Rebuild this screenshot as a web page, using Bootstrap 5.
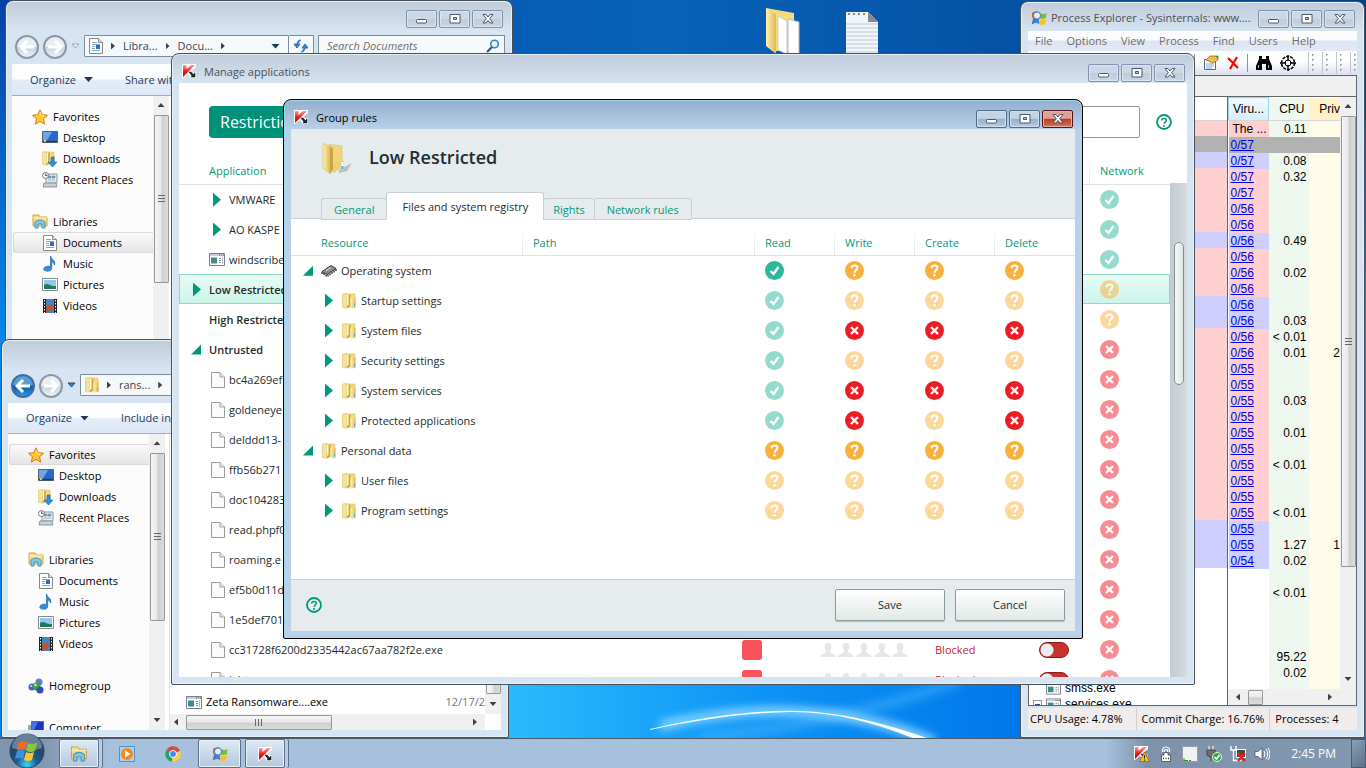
<!DOCTYPE html>
<html lang="en">
<head>
<meta charset="utf-8">
<meta name="viewport" content="width=device-width, initial-scale=1">
<title>Group rules</title>
<link rel="stylesheet" href="https://cdn.jsdelivr.net/npm/bootstrap@5.3.0/dist/css/bootstrap.min.css">
<style>
body{font:11px/16px "Open Sans","Noto Sans",sans-serif;color:#000;background:#0862b8}
button{font:inherit;color:inherit;padding:0;border:0;background:none}
svg{flex:none;display:block}
.desk{min-height:100vh;background:#0862b8}
.wall{inset:0;width:100%;height:100%}
.deskicons{left:766px;top:8px;gap:42px}

/* windows */
.win{position:absolute;border:1px solid #4a4f57;border-radius:8px 8px 2px 2px;padding:0 7px 7px;
  background:linear-gradient(#bfcbd9,#d7e4f2 30px);box-shadow:inset 0 0 0 1px #e8f0f8;overflow:hidden}
.client{flex:1 1 0;min-height:0;overflow:hidden;background:#fff}
.caption{height:29px;padding:10px 2px 0 3px}
.caption .ttl{color:#4a5058;line-height:16px}
.capbtn{width:31px;height:18px;border:1px solid #8291ad;border-radius:2px;background:linear-gradient(#ccd8e5 48%,#bdcbdb 50%,#c9d6e4);
  display:flex;align-items:center;justify-content:center;box-shadow:inset 0 0 0 1px #dbe5f0}
.caps{gap:2px}
.w-lib{left:5px;top:0;width:508px;bottom:140px;padding-left:6px}
.w-ran{left:1px;top:339px;width:508px;bottom:0;padding-left:6px}
.w-pe{right:1px;top:1px;width:345px;bottom:0}
.w-pe .caption{padding-top:8px}
.w-app{left:171px;right:171px;top:53px;bottom:53px}
.w-grp{left:283px;right:283px;top:99px;bottom:99px;border-color:#000;
  background:linear-gradient(#94afcd,#b9d1ea 30px);box-shadow:inset 0 0 0 1px #9fd8ec}
.w-grp .ttl{color:#000}
.w-grp .capbtn{border-color:#52698a;background:linear-gradient(#c3d4e7 46%,#94afcf 50%,#b7cde5);box-shadow:inset 0 0 0 1px #cfdeee}
.w-grp .capbtn.x{border-color:#53141a;background:linear-gradient(#dfa096 46%,#b93a20 50%,#d2765c);box-shadow:inset 0 0 0 1px #e6b0a6}

/* file explorer */
.extop{height:34px;padding:9px 2px 0}
.exnav{height:29px;padding-left:3px}
.circ{width:24px;height:24px;border-radius:50%;border:2px solid #8b98a8;background:linear-gradient(#e9eef3 50%,#c7d2de 52%,#eef3f8)}
.circ.on{border-color:#3f6ea5;background:linear-gradient(#5a9bd8 45%,#0b4ea8 50%,#27a0e6)}
.addr{height:22px;border:1px solid #7f8a97;border-radius:1px;background:#f6f9fc;color:#3b434c}
.addr.half{border-left:0}
.exsearch{width:187px;height:22px;border:1px solid #7f8a97;background:#f6f9fc;padding:0 4px 0 8px}
.exsearch input{border:0;outline:0;background:none;width:140px;font-style:italic;padding:0}
.exsearch input::placeholder{color:#6d6d6d;opacity:1}
.extool{height:32px;background:linear-gradient(#fdfeff 48%,#e4ecf7 52%,#dde7f5);border-bottom:1px solid #a0afc3;color:#1e395b;padding-left:18px}
.caret{width:9px;height:5px;background:#1e395b;clip-path:polygon(0 0,100% 0,50% 100%)}
.expane{background:#fcfcfc;width:141px;padding:10px 0 0}
.expane a{height:21px;padding-left:18px;gap:5px;color:#000;text-decoration:none;border:1px solid transparent;margin-left:1px}
.expane a.sub{padding-left:28px}
.expane a.sel{border-color:#d9d9d9;border-right:0;border-radius:3px 0 0 3px;background:linear-gradient(#fafafa,#e5e5e5)}
.gap21{height:21px}

/* scroll bars */
.vbar{width:16px;background:#f0f0f0;padding-top:7px}
.vbar .up,.vbar .down{width:7px;height:4px;background:#404040;clip-path:polygon(50% 0,100% 100%,0 100%)}
.vbar .down{clip-path:polygon(0 0,100% 0,50% 100%)}
.vthumb{width:15px;border:1px solid #979797;border-radius:1px;background:linear-gradient(90deg,#f5f5f5,#e9e9e9 45%,#cfcfd1 55%,#dcdcdc)}
.hbar{height:16px;background:#f0f0f0}
.hthumb{height:15px;border:1px solid #979797;border-radius:1px;background:linear-gradient(#f5f5f5,#e9e9e9 45%,#cfcfd1 55%,#dcdcdc)}
.grip{width:7px;height:8px;background:repeating-linear-gradient(#666 0 1px,transparent 1px 3px)}
.gripv{width:8px;height:7px;background:repeating-linear-gradient(90deg,#666 0 1px,transparent 1px 3px)}
.lft,.rgt{width:4px;height:7px;background:#404040;clip-path:polygon(0 50%,100% 0,100% 100%)}
.rgt{clip-path:polygon(0 0,100% 50%,0 100%)}

/* security application */
.green{color:#00997a}
.tri{width:8px;height:14px;background:#00997a;clip-path:polygon(0 0,100% 50%,0 100%)}
.tri.open{width:10px;height:10px;clip-path:polygon(100% 0,100% 100%,0 100%)}
.restr{height:32px;border-radius:4px;background:#00917a;color:#fff;font-size:16px;padding:0 11px}
.afind{height:32px;border:1px solid #8b9a97;border-radius:2px;outline:0}
.apphead{padding:23px 15px 12px 30px;margin-right:-17px}
.apps{table-layout:fixed;color:#222b2b}
.apps tr{height:30px}
.apps thead tr{height:34px}
.apps th{font-weight:400;vertical-align:middle;padding:8px 0 0;border-bottom:1px solid #dfe3e5}
.apps td,.rules td{padding:1px 0 0;white-space:nowrap}
.apps th.sepl,.rules th.sepl{background:linear-gradient(#fff 20%,#dfe3e5) left/1px 100% no-repeat}
.apps tr.pick{background:linear-gradient(#e9fbf5,#cbf5e9);outline:1px solid #8adbc5;outline-offset:-1px}
.sbold{font-weight:600}
.sq{width:20px;height:20px;border-radius:3px;background:#fa525a}
.sw{appearance:none;width:30px;height:16px;margin:0;border-radius:8px;border:1px solid #93181c;display:block;
  background:radial-gradient(circle at 7px 7px,#ececec 0 6px,transparent 7px),#c93030}
.blk{color:#cc2233}
.kbar{width:17px;background:linear-gradient(90deg,#c0cbd2,#d5dce0);margin-top:100px;padding:59px 3px 0 4px}
.kthumb{height:143px;border:1px solid #83908f;border-radius:5px;background:linear-gradient(90deg,#f6f9f8,#dfe7e5)}
.ghead{height:90px;background:#e6ebed;border-bottom:1px solid #c5cfd4;padding-left:30px}
.gtitle{padding-top:14px}
.gname{font-size:18px;line-height:24px;font-weight:600;color:#222b30;padding-bottom:4px}
.ghead .nav-tabs{border:0;align-items:flex-end;margin-bottom:-1px}
.ghead .nav-link{height:22px;padding:0 12px;border:1px solid #c5cfd4;border-right:0;border-radius:3px 3px 0 0;color:#00997a;background:#e6ebed;line-height:22px}
.ghead li:last-child .nav-link{border-right:1px solid #c5cfd4}
.ghead .nav-link.active{height:28px;line-height:28px;padding:0 15px;background:#fff;color:#222b30;border:1px solid #c5cfd4;border-bottom-color:#fff;margin-right:-1px}
.ghead .nav-link.slim{padding:0 9px}
.rules{table-layout:fixed;color:#222b2b}
.rules th{height:36px;font-weight:400;color:#00997a;padding:12px 0 0 11px;border-bottom:1px solid #dfe3e5}
.rules th:first-child{padding-left:30px}
.rules td{height:30px}
.rules td+td+td{padding-left:11px}
.dim{opacity:.5}
.gfoot{height:52px;background:#e6ebed;border-top:1px solid #c5cfd4;padding:0 10px 2px 15px;gap:10px}
.kbtn{width:110px;height:32px;border:1px solid #8d9b99;border-radius:2px;background:linear-gradient(#fff,#e1e9e7);color:#222b30;box-shadow:0 1px 1px #b5bfc0}

/* process explorer */
.pefont,.pefont th,.pefont td{font:12px/16px "Liberation Sans",Arial,sans-serif}
.pemenu{height:20px;background:linear-gradient(#fbfcfe 45%,#dfe4f3 50%,#e4e8f5);color:#6d6d6d;padding-left:7px}
.pemenu button{padding-right:14px}
.petool{height:24px;padding-right:1px;background:linear-gradient(#fff 40%,#dbe0f0);gap:8px}
.pesep{width:1px;height:18px;background:#8b8f99}
.dots{width:6px;height:22px;border-left:1px solid #c0c4ce;background:radial-gradient(circle,#9aa0ad 1px,transparent 1px) 1px 0/5px 5px}
.peband{height:22px;background:#f0f0f0;border:1px solid #646464;border-left:0}
.peview{border:1px solid #646464;border-top:0;min-height:0}
.petree{width:199px;border-right:1px solid #646464;overflow:hidden}
.petree table,.pedata table{table-layout:fixed}
.peview th{height:23px;font-weight:400;border-bottom:1px solid #d5d5d5;padding:0}
.peview td{height:16px;padding:0;white-space:nowrap;overflow:hidden}
.peview a{color:#00e;text-decoration:underline;margin-left:2px}
.viru{background:linear-gradient(#f2f9fd,#d6edfa);border:1px solid #9ad6f0}
.cpu{background:#eef8ef;text-align:right}
.priv{background:#fffbe8}
.priv.hd{background:#fff2c8}
.peview td.cpu{padding-right:2px}
.pink .bg{background:#ffcfcf}.blue .bg{background:#cfcfff}
.grey .bg,.grey .cpu,.grey .priv{background:#b2b2b2}
.box{width:9px;height:9px;border:1px solid #8a94a6;background:linear-gradient(#2a4a90,#2a4a90) center/5px 1px no-repeat #fff}
.pestat{height:22px;background:#f0eceb;margin-top:2px}
.pestat span{padding:0 13px 0 2px;border-right:1px solid #d5d0cf;line-height:22px;white-space:nowrap}
.pestat span+span{padding:0 5px}
.pestat span:last-child{border:0}

/* task bar */
.bar{height:30px;border-top:1px solid #4d5a6b;z-index:5;
  background:linear-gradient(90deg,#8095ad 40px,#a7c0dc 110px,#a7c0dc calc(100% - 260px),#7e93ab calc(100% - 220px),#8297b0)}
.tb{width:40px;height:29px;border-radius:2px;display:flex;align-items:center;justify-content:center}
.tb.run{border:1px solid #5a6f8b;background:linear-gradient(#dfe9f4,#b4c8df);box-shadow:inset 0 0 0 1px #e9f1f9}
.tb.many{box-shadow:inset 0 0 0 1px #e9f1f9,3px 0 0 #b9cde3,4px 0 0 #5a6f8b}
.tb.wide{width:43px}
.orb{margin:-5px 14px 0 9px;width:36px;height:36px}
.tray{gap:8px;color:#fff}
.clock{padding:0 7px 0 13px;font-size:12px}
.peek{width:15px;height:29px;border:1px solid #4b5a6d;background:linear-gradient(135deg,#8ba0b8,#5b6f86)}
</style>
</head>
<body>
<svg width="0" height="0" class="position-absolute" aria-hidden="true">
<defs>
<linearGradient id="gf" x1="0" x2="1"><stop offset="0" stop-color="#fff3b0"/><stop offset="1" stop-color="#dfbb55"/></linearGradient>
<linearGradient id="gr" x1="0" y1="0" x2="0" y2="1"><stop offset="0" stop-color="#f7a0a0"/><stop offset=".5" stop-color="#e8201c"/><stop offset="1" stop-color="#c90000"/></linearGradient>
<symbol id="ok" viewBox="0 0 19 19"><circle cx="9.500" cy="9.500" r="9.500" fill="#2db89c"/><path d="M5.500 10l3 3 5-7" fill="none" stroke="#fff" stroke-width="2.400"/></symbol>
<symbol id="ask" viewBox="0 0 19 19"><circle cx="9.500" cy="9.500" r="9.500" fill="#fbb03b"/><path d="M6.500 7.200C6.500 3.500 12.700 3.700 12.500 7c-.1 2-2.900 2.200-2.900 4.800" fill="none" stroke="#fff" stroke-width="2"/><circle cx="9.500" cy="14.300" r="1.300" fill="#fff"/></symbol>
<symbol id="no" viewBox="0 0 19 19"><circle cx="9.500" cy="9.500" r="9.500" fill="#ee1c25"/><path d="M6 6l7 7M13 6l-7 7" stroke="#fff" stroke-width="2.400"/></symbol>
<symbol id="help" viewBox="0 0 16 16"><circle cx="8" cy="8" r="7" fill="none" stroke="#00997a" stroke-width="1.800"/><path d="M5.700 6.500c0-2.800 4.700-2.700 4.600 0C10.200 8 8 8.100 8 9.800" fill="none" stroke="#00997a" stroke-width="1.600"/><circle cx="8" cy="12" r="1" fill="#00997a"/></symbol>
<symbol id="kas" viewBox="0 0 14 14"><path d="M0 0h14v3l-5 4 5 2v5H9L6 10l-5 4H0z" fill="#fff"/><path d="M1 1h3.500v4L9 1h4L7 7l-6 6z" fill="url(#gr)"/><path d="M7 8h2l2.500 2.500L13 9v4H9l1-1z" fill="#222" stroke="#222" stroke-width=".6"/></symbol>
<symbol id="folder" viewBox="0 0 14 16"><path d="M5 1h8v13H5z" fill="#f1da80" stroke="#dfc163" stroke-width=".6"/><path d="M.5 1L5 .5V15l-4.500-.5z" fill="#f5e397" stroke="#dcbf64" stroke-width=".6"/><path d="M5 2l3.500-.5v12L5 15.500z" fill="#cda94a"/><path d="M5 2l1.500-.3v10L5 13z" fill="#fff8d0"/><path d="M8.500 5h5v10l-5 .5z" fill="url(#gf)"/><path d="M12.500 10.500v3" stroke="#58a6d8"/></symbol>
<symbol id="page" viewBox="0 0 14 16"><path d="M.5.500h8.500l4.500 4.500v10.500H.5z" fill="#fafafa" stroke="#9b9b9b"/><path d="M9 .500V5h4.500" fill="#e4e4e4" stroke="#a5a5a5"/></symbol>
<symbol id="doc" viewBox="0 0 14 16"><path d="M.5.500h9l4 4v11H.5z" fill="#fff" stroke="#888"/><path d="M9.500.500v4h4" fill="#ddd" stroke="#888"/><path d="M3 4.500h5M3 6.500h8M3 8.500h3M3 10.500h3M3 12.500h8" stroke="#8aa5c0"/><path d="M7 7h4v4H7z" fill="#2b6fc4"/></symbol>
<symbol id="app" viewBox="0 0 16 13"><path d="M.5.500h15v12H.5z" fill="#fff" stroke="#77808c"/><path d="M1 1h14v2H1z" fill="#c6ced9"/><path d="M10 2h1m1 0h1m1 0h1" stroke="#555"/><path d="M2 4.500h6v6H2z" fill="#3d8f86"/><path d="M10 5.500h2m-2 2h2m-2 2h2" stroke="#889"/><path d="M13.500 4v7" stroke="#bbb"/></symbol>
<symbol id="chip" viewBox="0 0 16 13"><path d="M1 7L10 1l5 3-9 6z" fill="#8d8d8d" stroke="#222" stroke-width=".8"/><path d="M1 7.500v2M3 8.500v2M5 10v2M7 10v2M9 8.700v2M11 7.300v2M13 6v2M15 4.500v2" stroke="#111" stroke-width="1.200"/><path d="M5 6l5-3" stroke="#ddd"/></symbol>
<symbol id="star" viewBox="0 0 16 16"><path d="M8 .8l2.200 4.900 5.300.6-4 3.500 1.200 5.400L8 12.400l-4.700 2.800 1.200-5.400-4-3.500 5.300-.6z" fill="#fdc92e" stroke="#e0761b"/><path d="M8 3l1.500 3.500 3 .6" stroke="#fff3a0" fill="none"/></symbol>
<symbol id="desk" viewBox="0 0 16 13"><path d="M.5.500h15v11H.5z" fill="#2b67c8" stroke="#56606e"/><path d="M1 1h9L4 11H1z" fill="#6ea6ea"/><path d="M1 10.500h14" stroke="#243a60" stroke-width="1.500"/><path d="M2 9h2v2H2z" fill="#e8c04a"/></symbol>
<symbol id="down" viewBox="0 0 16 16"><use href="#folder" width="13" height="15"/><path d="M9 6h3v5h3l-4.500 5L6 11h3z" fill="#2f8fdc" stroke="#1667ad" stroke-width=".6"/></symbol>
<symbol id="recent" viewBox="0 0 16 16"><path d="M4 2h11v9H4z" fill="#e3ebf0" stroke="#8b979f"/><path d="M6 4h3v2H6zM10 4h3v2h-3zM6 8h7" fill="#5aa3d6" stroke="#7793a5" stroke-width=".6"/><path d="M2 11h12l1 4H1z" fill="#c9ced2" stroke="#8b979f"/><circle cx="3.500" cy="3.500" r="3" fill="#fff" stroke="#777"/><path d="M3.500 1.500v2h2" stroke="#555" fill="none"/></symbol>
<symbol id="libs" viewBox="0 0 16 15"><path d="M1 1h6l1 2h7v9H1z" fill="#f5dd85" stroke="#c9a548"/><path d="M1 4h14" stroke="#fff2bd"/><path d="M3 14V8q5-4 10 0v6h-3v-4H6v4z" fill="#86c8e8" stroke="#3f93bf"/></symbol>
<symbol id="music" viewBox="0 0 16 16"><path d="M8.500 0c1 4 5.500 4 4 9-.6-2-1.800-3-2.800-3v6.500c0 3-5.700 3.500-7.700 1.500-1-3 2.700-4.500 6.500-3.500z" fill="#2f8fd8" stroke="#1c63a8" stroke-width=".7"/></symbol>
<symbol id="pics" viewBox="0 0 16 13"><path d="M.5.500h15v12H.5z" fill="#fff" stroke="#888"/><path d="M2 2h12v9H2z" fill="#8ccbee"/><path d="M2 7c4-3 6 2 12 1v3H2z" fill="#1f7a5c"/></symbol>
<symbol id="vids" viewBox="0 0 14 14"><path d="M0 0h14v14H0z" fill="#222"/><path d="M3 0h8v14H3z" fill="#3f87c8"/><path d="M3 8l4-3 4 2-3 5-5 2z" fill="#b6593a"/><path d="M1.500 1v13M12.500 1v13" stroke="#fff" stroke-dasharray="1.500 1.500"/></symbol>
<symbol id="home" viewBox="0 0 16 16"><circle cx="4" cy="9" r="3.500" fill="#3a62c8"/><circle cx="11" cy="4" r="3.500" fill="#5b7fd6"/><circle cx="8.500" cy="8.500" r="4" fill="#3fa33d"/><circle cx="12" cy="12" r="3.500" fill="#2f4fb5"/><circle cx="7.500" cy="7" r="1.200" fill="#d6f2d0"/><circle cx="3.200" cy="8" r="1" fill="#cfdcff"/></symbol>
<symbol id="comp" viewBox="0 0 16 14"><path d="M0 4h3v9H0z" fill="#9aa"/><path d="M3.500.500h12v9h-12z" fill="#1a34c0" stroke="#667"/><path d="M4 1h6L6 9H4z" fill="#4c70e0"/><path d="M7 10h5v3H7z" fill="#aab"/></symbol>
<symbol id="pex" viewBox="0 0 16 16"><path d="M1 3q3.500-3 7-1v6q-3.500-2-7 0z" fill="#e8552b"/><path d="M8.500 3q4 2 7 0l-.5 5q-3.500 2-6.500 0z" fill="#7fba3c"/><path d="M2 8q3-1 6 0v6q-3-2-7 0z" fill="#3c86d8"/><path d="M8.500 9q3.500 2 6.500 0l-.8 5q-3 2-6.200 0z" fill="#f5c228"/><circle cx="6" cy="5.500" r="3.600" fill="#dceefa" stroke="#4b78a8"/><path d="M4 9l-2.500 5" stroke="#5c6f88" stroke-width="1.500"/></symbol>
<symbol id="min" viewBox="0 0 14 12"><rect x="1.500" y="6.500" width="10" height="3.500" rx="1" fill="#fff" stroke="#4d5568"/></symbol>
<symbol id="max" viewBox="0 0 14 12"><path d="M2 1.500h10v8.500H2z" fill="#fff" stroke="#4d5568"/><path d="M5.500 4.500h3v2h-3z" fill="#b8c6d8" stroke="#4d5568"/></symbol>
<symbol id="cls" viewBox="0 0 14 12"><path d="M2 1.500h3L7 4l2-2.500h3L8.700 5.700l3.300 4.300H9L7 7.500 5 10H2l3.300-4.300z" fill="#fff" stroke="#4d5568"/></symbol>
<symbol id="man" viewBox="0 0 16 14"><path d="M8 0c5 0 3.500 6.500 1.800 8 .5 3 5.200 2 6.200 6H0c1-4 5.700-3 6.200-6C4.500 6.500 3 0 8 0z" fill="#e6e8e8"/></symbol>
<symbol id="people" viewBox="0 0 88 14"><use href="#man" width="16" height="14"/><use href="#man" x="18" width="16" height="14"/><use href="#man" x="36" width="16" height="14"/><use href="#man" x="54" width="16" height="14"/><use href="#man" x="72" width="16" height="14"/></symbol>
</defs>
</svg>

<div class="desk d-flex flex-column">
<main class="position-relative flex-grow-1 overflow-hidden">
  <svg class="wall position-absolute" viewBox="0 0 1366 738" preserveAspectRatio="none" aria-hidden="true">
    <defs>
      <linearGradient id="w1" x1="0" y1="0" x2="0" y2="1"><stop offset="0" stop-color="#0542a4"/><stop offset=".45" stop-color="#0a84ea"/><stop offset="1" stop-color="#0a80ec"/></linearGradient>
      <linearGradient id="w2" x1="0" x2="1"><stop offset="0" stop-color="#0858b4"/><stop offset=".35" stop-color="#0762b8"/><stop offset="1" stop-color="#03408e"/></linearGradient>
      <linearGradient id="w3" x1="0" x2="1"><stop offset="0" stop-color="#2bbcfc"/><stop offset=".5" stop-color="#0d93f6"/><stop offset="1" stop-color="#0076ea"/></linearGradient>
      <filter id="bl" x="-10%" y="-200%" width="120%" height="500%"><feGaussianBlur stdDeviation="4"/></filter>
    </defs>
    <path d="M0 0h1366v738H0z" fill="url(#w1)"/><path d="M300 0h1066v120H300z" fill="url(#w2)"/><path d="M500 600h530v138H500z" fill="url(#w3)"/>
    <path d="M700 738Q850 722 960 680" stroke="#4ab8fb" stroke-width="12" fill="none" opacity=".45" filter="url(#bl)"/>
    <path d="M660 726Q810 690 935 742" stroke="#7fd2ff" stroke-width="10" fill="none" filter="url(#bl)"/>
    <path d="M650 729Q740 709 800 711T938 742L922 742Q850 711 790 712T650 730z" fill="#fff" opacity=".95"/>
  </svg>
  <div class="deskicons position-absolute d-flex">
    <svg width="38" height="46" viewBox="0 0 38 46"><path d="M0 0l28 5v38H9z" fill="#f4d982"/><path d="M12 8l9 5v33l-9-4z" fill="#fff" stroke="#ccc"/><path d="M22 11l11 3v38l-11-4z" fill="#fdfdfd" stroke="#bbb"/><path d="M0 0l10 6v40L0 38z" fill="url(#gf)"/></svg>
    <svg width="32" height="46" viewBox="0 0 32 46"><path d="M0 4h22l10 10v32H0z" fill="#f2f6f9"/><path d="M22 4v10h10z" fill="#8a8a8a"/><path d="M0 16h32M0 20h32M0 24h32M0 28h32M0 32h32M0 36h32M0 40h32M0 44h32" stroke="#b9cad8"/><path d="M2 6h18" stroke="#888" stroke-width="2" stroke-dasharray="2 3"/></svg>
  </div>

  <section class="win w-lib d-flex flex-column" aria-label="Documents">
    <div class="extop d-flex justify-content-end caps">
      <button class="capbtn" aria-label="Minimize"><svg width="14" height="12"><use href="#min"/></svg></button>
      <button class="capbtn" aria-label="Maximize"><svg width="14" height="12"><use href="#max"/></svg></button>
      <button class="capbtn" aria-label="Close"><svg width="14" height="12"><use href="#cls"/></svg></button>
    </div>
    <div class="exnav d-flex align-items-start">
      <button class="circ me-1 d-flex align-items-center justify-content-center" aria-label="Back"><svg width="16" height="14" viewBox="0 0 16 14"><path d="M8 1L2 7l6 6M2 7h13" stroke="#fff" stroke-width="3" fill="none"/></svg></button>
      <button class="circ d-flex align-items-center justify-content-center" aria-label="Forward"><svg width="16" height="14" viewBox="0 0 16 14"><path d="M8 1l6 6-6 6M14 7H1" stroke="#fff" stroke-width="3" fill="none"/></svg></button>
      <svg class="mt-2 mx-1" width="9" height="6" viewBox="0 0 9 6"><path d="M1 1h7L4.500 5z" fill="#eef3f8" stroke="#98a5b5"/></svg>
      <div class="addr d-flex align-items-center ps-1 flex-grow-1">
        <svg width="14" height="16"><use href="#doc"/></svg><span class="rgt ms-2 me-2"></span>Libra...<span class="rgt ms-2 me-2"></span>Docu...<span class="rgt ms-2"></span>
        <span class="caret ms-auto me-2"></span>
      </div>
      <button class="addr half px-1 me-1" aria-label="Refresh"><svg width="16" height="16" viewBox="0 0 16 16"><path d="M8 2q-4 0-4 5M1 6l3 4 3-4zM8 14q4 0 4-5M9 10l3-4 3 4z" fill="#2f7fc9" stroke="#2f6fb4"/></svg></button>
      <div class="exsearch d-flex align-items-center justify-content-between"><input type="text" placeholder="Search Documents" aria-label="Search Documents"><svg width="14" height="14" viewBox="0 0 14 14"><circle cx="8.500" cy="5" r="3.800" fill="#e6f4fc" stroke="#2f86c8" stroke-width="1.600"/><path d="M6 8l-5 5" stroke="#2a52a0" stroke-width="2.200"/></svg></div>
    </div>
    <div class="client d-flex flex-column">
      <div class="extool d-flex align-items-center"><button class="d-flex align-items-center">Organize<span class="caret ms-2"></span></button><button class="ms-4 ps-2">Share with</button></div>
      <div class="d-flex flex-grow-1">
        <nav class="expane d-flex flex-column">
          <a href="#" class="d-flex align-items-center"><svg width="16" height="16"><use href="#star"/></svg>Favorites</a>
          <a href="#" class="d-flex align-items-center sub"><svg width="16" height="13"><use href="#desk"/></svg>Desktop</a>
          <a href="#" class="d-flex align-items-center sub"><svg width="16" height="16"><use href="#down"/></svg>Downloads</a>
          <a href="#" class="d-flex align-items-center sub"><svg width="16" height="16"><use href="#recent"/></svg>Recent Places</a>
          <div class="gap21"></div>
          <a href="#" class="d-flex align-items-center"><svg width="16" height="15"><use href="#libs"/></svg>Libraries</a>
          <a href="#" class="d-flex align-items-center sub sel"><svg width="16" height="16"><use href="#doc"/></svg>Documents</a>
          <a href="#" class="d-flex align-items-center sub"><svg width="16" height="16"><use href="#music"/></svg>Music</a>
          <a href="#" class="d-flex align-items-center sub"><svg width="16" height="13"><use href="#pics"/></svg>Pictures</a>
          <a href="#" class="d-flex align-items-center sub"><svg width="16" height="14"><use href="#vids"/></svg>Videos</a>
        </nav>
        <div class="vbar d-flex flex-column align-items-center"><span class="up mb-2"></span><div class="vthumb d-flex align-items-center justify-content-center" style="height:168px"><span class="grip"></span></div></div>
      </div>
    </div>
  </section>

  <section class="win w-ran d-flex flex-column" aria-label="Folder">
    <div class="extop"></div>
    <div class="exnav d-flex align-items-start">
      <button class="circ on me-1 d-flex align-items-center justify-content-center" aria-label="Back"><svg width="16" height="14" viewBox="0 0 16 14"><path d="M8 1L2 7l6 6M2 7h13" stroke="#fff" stroke-width="3" fill="none"/></svg></button>
      <button class="circ d-flex align-items-center justify-content-center" aria-label="Forward"><svg width="16" height="14" viewBox="0 0 16 14"><path d="M8 1l6 6-6 6M14 7H1" stroke="#fff" stroke-width="3" fill="none"/></svg></button>
      <svg class="mt-2 mx-1" width="9" height="6" viewBox="0 0 9 6"><path d="M1 1h7L4.500 5z" fill="#2f86c8" stroke="#2a4a78"/></svg>
      <div class="addr d-flex align-items-center ps-1 flex-grow-1"><svg width="14" height="16"><use href="#folder"/></svg><span class="rgt ms-2 me-2"></span>rans...<span class="rgt ms-2"></span></div>
    </div>
    <div class="client d-flex flex-column">
      <div class="extool d-flex align-items-center"><button class="d-flex align-items-center">Organize<span class="caret ms-2"></span></button><button class="ms-4 ps-2">Include in</button></div>
      <div class="d-flex flex-grow-1 overflow-hidden">
        <nav class="expane d-flex flex-column overflow-hidden">
          <a href="#" class="d-flex align-items-center sel flex-shrink-0"><svg width="16" height="16"><use href="#star"/></svg>Favorites</a>
          <a href="#" class="d-flex align-items-center sub flex-shrink-0"><svg width="16" height="13"><use href="#desk"/></svg>Desktop</a>
          <a href="#" class="d-flex align-items-center sub flex-shrink-0"><svg width="16" height="16"><use href="#down"/></svg>Downloads</a>
          <a href="#" class="d-flex align-items-center sub flex-shrink-0"><svg width="16" height="16"><use href="#recent"/></svg>Recent Places</a>
          <div class="gap21 flex-shrink-0"></div>
          <a href="#" class="d-flex align-items-center flex-shrink-0"><svg width="16" height="15"><use href="#libs"/></svg>Libraries</a>
          <a href="#" class="d-flex align-items-center sub flex-shrink-0"><svg width="16" height="16"><use href="#doc"/></svg>Documents</a>
          <a href="#" class="d-flex align-items-center sub flex-shrink-0"><svg width="16" height="16"><use href="#music"/></svg>Music</a>
          <a href="#" class="d-flex align-items-center sub flex-shrink-0"><svg width="16" height="13"><use href="#pics"/></svg>Pictures</a>
          <a href="#" class="d-flex align-items-center sub flex-shrink-0"><svg width="16" height="14"><use href="#vids"/></svg>Videos</a>
          <div class="gap21 flex-shrink-0"></div>
          <a href="#" class="d-flex align-items-center flex-shrink-0"><svg width="16" height="16"><use href="#home"/></svg>Homegroup</a>
          <div class="gap21 flex-shrink-0"></div>
          <a href="#" class="d-flex align-items-center flex-shrink-0"><svg width="16" height="14"><use href="#comp"/></svg>Computer</a>
        </nav>
        <div class="vbar d-flex flex-column align-items-center flex-shrink-0"><span class="up mb-2"></span><div class="vthumb d-flex align-items-center justify-content-center" style="height:168px"><span class="grip"></span></div><span class="down mt-auto mb-2"></span></div>
        <div class="flex-grow-1 d-flex flex-column justify-content-end border-start ms-1">
          <div class="d-flex flex-grow-1">
            <div class="flex-grow-1 d-flex align-items-end pb-1 ps-3"><div class="d-flex align-items-center w-100"><svg width="16" height="13" class="me-1"><use href="#app"/></svg>Zeta Ransomware....exe<span class="ms-auto text-secondary">12/17/2</span></div></div>
            <div class="vbar d-flex flex-column align-items-center justify-content-end pb-2"><div class="vthumb flex-grow-1 mb-2"></div><span class="down"></span></div>
          </div>
          <div class="hbar d-flex align-items-center me-3 ps-1"><span class="lft me-2"></span><div class="hthumb d-flex align-items-center justify-content-center" style="width:146px"><span class="gripv"></span></div><span class="rgt ms-auto me-2"></span></div>
        </div>
      </div>
    </div>
  </section>

  <section class="win w-pe d-flex flex-column" aria-label="Process Explorer">
    <div class="caption d-flex align-items-start"><svg width="16" height="16" class="me-1"><use href="#pex"/></svg><span class="ttl text-nowrap me-auto">Process Explorer - Sysinternals: www....</span>
      <div class="d-flex caps"><button class="capbtn" aria-label="Minimize"><svg width="14" height="12"><use href="#min"/></svg></button><button class="capbtn" aria-label="Maximize"><svg width="14" height="12"><use href="#max"/></svg></button><button class="capbtn" aria-label="Close"><svg width="14" height="12"><use href="#cls"/></svg></button></div>
    </div>
    <div class="pemenu d-flex align-items-center"><button>File</button><button>Options</button><button>View</button><button>Process</button><button>Find</button><button>Users</button><button>Help</button></div>
    <div class="petool d-flex align-items-center justify-content-end">
      <span class="pesep"></span>
      <svg width="16" height="16" viewBox="0 0 16 16"><path d="M1.500 4.500h11v10h-11z" fill="#fff" stroke="#667"/><path d="M3 9h8M3 11h8M3 13h6" stroke="#7aa7d8"/><path d="M3 5l4-4h8v4l-5 3z" fill="#e8c24a" stroke="#7a5a14" stroke-width=".7"/><path d="M12 1l3 0v3z" fill="#3c9a3c"/></svg>
      <svg width="12" height="14" viewBox="0 0 12 14"><path d="M1 2l10 10M10 1L3 13" stroke="#f00" stroke-width="2.200"/></svg>
      <span class="pesep"></span>
      <svg width="16" height="14" viewBox="0 0 16 14"><path d="M3 0h3v3h4V0h3v3l3 7v4h-6V8H6v6H0v-4l3-7z" fill="#000"/><path d="M2.500 9v3M12.500 9v3" stroke="#aaa"/></svg>
      <svg width="16" height="16" viewBox="0 0 16 16"><circle cx="8" cy="8" r="6.500" fill="none" stroke="#000" stroke-width="1.600" stroke-dasharray="3 1"/><circle cx="8" cy="8" r="3" fill="none" stroke="#000"/><path d="M8 0v6M8 10v6M0 8h6M10 8h6" stroke="#000" stroke-width="1.400"/></svg>
      <div class="d-flex gap-2 ms-1"><span class="dots"></span><span class="dots"></span><span class="dots"></span><span class="dots"></span></div>
    </div>
    <div class="peband"></div>
    <div class="client peview d-flex pefont">
      <div class="petree flex-shrink-0"><table class="w-100"><thead><tr><th></th></tr></thead><tbody id="tree"></tbody></table></div>
      <div class="pedata flex-grow-1 d-flex flex-column overflow-hidden">
        <div class="d-flex flex-grow-1 overflow-hidden">
          <div class="flex-grow-1 overflow-hidden"><table class="w-100"><colgroup><col style="width:40px"><col style="width:40px"><col></colgroup>
            <thead><tr><th class="viru text-center">Viru...</th><th class="cpu pe-1">CPU</th><th class="priv hd text-end">Priv</th></tr></thead><tbody id="data"></tbody></table></div>
          <div class="vbar d-flex flex-column align-items-center flex-shrink-0"><span class="up mb-2"></span><div class="vthumb d-flex align-items-center justify-content-center" style="height:451px"><span class="grip"></span></div><span class="down mt-auto mb-2"></span></div>
        </div>
        <div class="hbar d-flex align-items-center flex-shrink-0 ps-2 pe-4"><span class="lft me-2"></span><div class="hthumb" style="width:15px"></div><span class="rgt ms-auto"></span></div>
      </div>
    </div>
    <div class="pestat d-flex overflow-hidden"><span>CPU Usage: 4.78%</span><span>Commit Charge: 16.76%</span><span>Processes: 4</span></div>
  </section>

  <section class="win w-app d-flex flex-column" aria-label="Manage applications">
    <div class="caption d-flex align-items-start"><svg width="14" height="14" class="me-1"><use href="#kas"/></svg><span class="ttl ps-1 me-auto">Manage applications</span>
      <div class="d-flex caps"><button class="capbtn" aria-label="Minimize"><svg width="14" height="12"><use href="#min"/></svg></button><button class="capbtn" aria-label="Maximize"><svg width="14" height="12"><use href="#max"/></svg></button><button class="capbtn" aria-label="Close"><svg width="14" height="12"><use href="#cls"/></svg></button></div>
    </div>
    <div class="client d-flex">
      <div class="flex-grow-1">
        <div class="apphead d-flex align-items-center justify-content-between">
          <button class="restr">Restrictio</button>
          <div class="d-flex align-items-center gap-3"><input class="afind" type="text" aria-label="Find application"><button aria-label="Help"><svg width="16" height="16"><use href="#help"/></svg></button></div>
        </div>
        <table class="apps w-100"><colgroup><col><col style="width:78px"><col style="width:115px"><col style="width:104px"><col style="width:50px"><col style="width:81px"></colgroup>
          <thead><tr><th class="green" style="padding-left:30px">Application</th><th></th><th></th><th></th><th></th><th class="green sepl" style="padding-left:11px">Network</th></tr></thead>
          <tbody id="apps"></tbody></table>
      </div>
      <div class="kbar flex-shrink-0"><div class="kthumb"></div></div>
    </div>
  </section>

  <section class="win w-grp d-flex flex-column" role="dialog" aria-label="Group rules">
    <div class="caption d-flex align-items-start"><svg width="14" height="14" class="me-1"><use href="#kas"/></svg><span class="ttl ps-1 me-auto">Group rules</span>
      <div class="d-flex caps"><button class="capbtn" aria-label="Minimize"><svg width="14" height="12"><use href="#min"/></svg></button><button class="capbtn" aria-label="Maximize"><svg width="14" height="12"><use href="#max"/></svg></button><button class="capbtn x" aria-label="Close"><svg width="14" height="12"><use href="#cls"/></svg></button></div>
    </div>
    <div class="client d-flex flex-column">
      <div class="ghead d-flex flex-column justify-content-between flex-shrink-0">
        <div class="gtitle d-flex align-items-center">
          <svg width="32" height="32" viewBox="0 0 32 32" class="me-3"><path d="M18 27l13-7-5 8-8 2z" fill="#8a9498" opacity=".5"/><path d="M8 1.500L21 3v19l-8 8z" fill="#f0d678" stroke="#dcbf60" stroke-width=".6"/><path d="M20 18h3v9h-4z" fill="#e8cb6a"/><path d="M2 .500l7 3v27.500l-4-4-3-2z" fill="url(#gf)" stroke="#d9b957" stroke-width=".6"/><path d="M9 3.500l3 1.500v22l-3 4z" fill="#c9a546"/><path d="M12 21l8-3v8l-8 3z" fill="#ead079"/><path d="M21.500 19v5" stroke="#fff" stroke-width="2"/><path d="M21.500 23v3" stroke="#56a5dc" stroke-width="1.500"/></svg>
          <span class="gname">Low Restricted</span>
        </div>
        <ul class="nav nav-tabs">
          <li class="nav-item"><button class="nav-link">General</button></li><li class="nav-item"><button class="nav-link active">Files and system registry</button></li><li class="nav-item"><button class="nav-link slim">Rights</button></li><li class="nav-item"><button class="nav-link">Network rules</button></li>
        </ul>
      </div>
      <div class="flex-grow-1 overflow-hidden">
        <table class="rules w-100"><colgroup><col style="width:231px"><col><col style="width:80px"><col style="width:80px"><col style="width:80px"><col style="width:81px"></colgroup>
          <thead><tr><th>Resource</th><th class="sepl">Path</th><th class="sepl">Read</th><th class="sepl">Write</th><th class="sepl">Create</th><th class="sepl">Delete</th></tr></thead>
          <tbody id="rules"></tbody></table>
      </div>
      <div class="gfoot d-flex align-items-center flex-shrink-0"><button class="me-auto" aria-label="Help"><svg width="16" height="16"><use href="#help"/></svg></button><button class="kbtn">Save</button><button class="kbtn">Cancel</button></div>
    </div>
  </section>
</main>

<footer class="bar d-flex align-items-center position-relative flex-shrink-0">
  <button class="orb" aria-label="Start"><svg width="36" height="36" viewBox="0 0 36 36"><defs><radialGradient id="ob" cy=".9"><stop offset="0" stop-color="#3fd4f5"/><stop offset=".6" stop-color="#1a5f96"/><stop offset="1" stop-color="#24496e"/></radialGradient></defs><circle cx="18" cy="18" r="17" fill="url(#ob)" stroke="#274663"/><path d="M3 15a15 14 0 0 1 30 0Q18 20 3 15z" fill="#fff" opacity=".3"/><path d="M9 10q4-3 9-1l-2 8q-4-2-8 0z" fill="#ee6a2b"/><path d="M19 10q4 2 9 0l-2 8q-4 2-9 0z" fill="#8cc63f"/><path d="M8 18q4-2 8 0l-2 8q-4-2-8 0z" fill="#3f8fe0"/><path d="M17 19q4 2 8 0l-2 8q-4 2-8 0z" fill="#fbc62d"/></svg></button>
  <button class="tb run many" aria-label="Windows Explorer"><svg width="18" height="16"><use href="#libs"/></svg></button>
  <button class="tb ms-2" aria-label="Media Player"><svg width="16" height="16" viewBox="0 0 16 16"><path d="M.5.500h15v15H.5z" fill="#a9d3ee" stroke="#4f94c4"/><circle cx="8" cy="8" r="6" fill="#f28a1b"/><path d="M6 4.500L11.500 8 6 11.500z" fill="#fff"/></svg></button>
  <button class="tb wide ms-1 me-1" aria-label="Chrome"><svg width="16" height="16" viewBox="0 0 16 16"><path d="M8 8L1.500 4A7.500 7.500 0 0 1 15 5z" fill="#dd4b3e"/><path d="M8 8L1.500 4a7.500 7.500 0 0 0 5.500 11.500z" fill="#1fa463"/><path d="M8 8l7-3a7.500 7.500 0 0 1-8 10.500z" fill="#ffce44"/><circle cx="8" cy="8" r="3.500" fill="#4587f3" stroke="#fff"/></svg></button>
  <button class="tb wide run" aria-label="Process Explorer"><svg width="16" height="16"><use href="#pex"/></svg></button>
  <button class="tb run many ms-1" aria-label="Kaspersky"><svg width="14" height="14"><use href="#kas"/></svg></button>
  <div class="tray d-flex align-items-center ms-auto">
    <svg width="16" height="16" viewBox="0 0 16 16"><use href="#kas" width="14" height="14"/><path d="M10.500 6l5 9.500h-10z" fill="#ffc423" stroke="#8a6010" stroke-width=".7"/><path d="M10.500 9v3.500M10.500 13.500v1.200" stroke="#333" stroke-width="1.200"/></svg>
    <svg width="16" height="16" viewBox="0 0 16 16"><path d="M4.500 6Q4 1 8 1t3.500 5M6.500 6.500q-.8-3 1.500-3t1.500 3" fill="none" stroke="#fff" stroke-width="1.200"/><path d="M6 6.500h4V9h2.500v6.500h-9V9H6z" fill="#fff" stroke="#333" stroke-width=".7"/><path d="M5 12.500h1m1.500 0h1m1.500 0h1" stroke="#333" stroke-width="1.500"/></svg>
    <svg width="16" height="16" viewBox="0 0 16 16"><path d="M.5.500h15v15H.5z" fill="#f1f3f1" stroke="#99a"/><path d="M1 14.500h5M7 14.500h2M1 13h2" stroke="#2e8b3a"/></svg>
    <svg width="16" height="16" viewBox="0 0 16 16"><path d="M3 0v4M7 0v4" stroke="#ddd" stroke-width="1.500"/><path d="M1 4h8v5q-4 4-8 0zM5 11v4" stroke="#444" fill="#6e6e6e"/><circle cx="11" cy="11" r="4.500" fill="#3aa53a" stroke="#e8f5e8"/><path d="M8.500 11l2 2 3-4" stroke="#fff" fill="none" stroke-width="1.500"/></svg>
    <svg width="16" height="16" viewBox="0 0 16 16"><path d="M6.500 3.500h9v8h-9z" fill="#4a4a4a" stroke="#fff"/><path d="M1 0v4h5V0M3.500 4v10.500h8" stroke="#fff" fill="none" stroke-width="1.400"/><path d="M8 7l7 8M15 7l-7 8" stroke="#e0201c" stroke-width="2.400"/></svg>
    <svg width="16" height="16" viewBox="0 0 16 16"><path d="M1 5.500h3L8 2v12l-4-3.500H1z" fill="#fff" stroke="#445" stroke-width=".7"/><path d="M10 5q2 3 0 6M12 3q3.500 5 0 10M14 2q4 6 0 12" stroke="#fff" fill="none"/></svg>
    <span class="clock">2:45 PM</span>
    <button class="peek" aria-label="Show desktop"></button>
  </div>
</footer>
</div>

<script src="https://cdn.jsdelivr.net/npm/bootstrap@5.3.0/dist/js/bootstrap.bundle.min.js"></script>
<script>
const badge = (code) => {
  const kinds = {v: 'ok', q: 'ask', x: 'no'};
  const kind = kinds[code.toLowerCase()];
  return `<svg width="19" height="19" class="${code === code.toUpperCase() ? '' : 'dim'}"><use href="#${kind}"/></svg>`;
};

/* upper-case letters are explicit rules, lower-case ones are inherited */
const rules = [
  ['Operating system', 'VQQQ', 'chip'], ['Startup settings', 'vqqq'], ['System files', 'vXXX'], ['Security settings', 'vqqq'],
  ['System services', 'vXXX'], ['Protected applications', 'vXqX'], ['Personal data', 'QQQQ', 'folder'], ['User files', 'qqqq'], ['Program settings', 'qqqq']
];
document.getElementById('rules').innerHTML = rules.map(([name, marks, top]) => `<tr><td><div class="d-flex align-items-center" style="padding-left:${top ? 12 : 34}px">
  <button class="tri ${top ? 'open' : ''} me-2" aria-label="Toggle"></button><svg width="16" height="16" class="me-1"><use href="#${top || 'folder'}"/></svg>${name}</div></td><td></td>${[...marks].map(m => `<td>${badge(m)}</td>`).join('')}</tr>`).join('');

const tri = '<button class="tri me-2" aria-label="Expand"></button>';
const page = '<svg width="14" height="16" class="me-1"><use href="#page"/></svg>';
const apps = [
  [34, tri + 'VMWARE', 'v'], [34, tri + 'AO KASPE', 'v'], [30, '<svg width="16" height="13" class="me-1"><use href="#app"/></svg>windscribe', 'v'],
  [14, tri + '<span class="sbold">Low Restricted</span>', 'q', 'pick'], [30, '<span class="sbold">High Restricted</span>', 'q'],
  [12, '<button class="tri open me-2" aria-label="Collapse"></button><span class="sbold">Untrusted</span>', 'x'],
  ...['bc4a269ef', 'goldeneye', 'delddd13-', 'ffb56b271', 'doc104283', 'read.phpf0', 'roaming.e', 'ef5b0d11d', '1e5def701'].map(n => [32, page + n, 'x']),
  [32, page + 'cc31728f6200d2335442ac67aa782f2e.exe', 'x', '', 1], [32, page + 'ight', 'x', '', 1]
];
document.getElementById('apps').innerHTML = apps.map(([pad, name, net, cls = '', full]) => `<tr class="${cls}"><td><div class="d-flex align-items-center" style="padding-left:${pad}px">${name}</div></td>
  <td>${full ? '<div class="sq"></div>' : ''}</td><td>${full ? '<svg width="88" height="14"><use href="#people"/></svg>' : ''}</td><td>${full ? '<span class="blk">Blocked</span>' : ''}</td>
  <td>${full ? '<input class="sw" type="checkbox" role="switch" aria-label="Network access">' : ''}</td><td style="padding-left:11px">${badge(net)}</td></tr>`).join('');

/* colour, detections, cpu, private bytes */
const procs = [['pink', 'The ...', '0.11'], ['grey', '0/57'], ['blue', '0/57', '0.08'], ['pink', '0/57', '0.32'], ['pink', '0/57'], ['pink', '0/56'], ['pink', '0/56'],
  ['blue', '0/56', '0.49'], ['pink', '0/56'], ['pink', '0/56', '0.02'], ['pink', '0/56'], ['blue', '0/56'], ['blue', '0/56', '0.03'], ['pink', '0/56', '&lt; 0.01'], ['pink', '0/56', '0.01', '2'],
  ['pink', '0/55'], ['pink', '0/55'], ['pink', '0/55', '0.03'], ['pink', '0/55'], ['pink', '0/55', '0.01'], ['pink', '0/55'], ['pink', '0/55', '&lt; 0.01'], ['pink', '0/55'], ['pink', '0/55'],
  ['pink', '0/55', '&lt; 0.01'], ['blue', '0/55'], ['blue', '0/55', '1.27', '1'], ['blue', '0/54', '0.02'], [''], ['', '', '&lt; 0.01'], [''], [''], [''], ['', '', '95.22'], ['', '', '0.02'], ['']];
document.getElementById('data').innerHTML = procs.map(([c, hit = '', cpu = '', mem = '']) => `<tr class="${c}"><td class="bg">${hit.includes('/') ? `<a href="#">${hit}</a>` : `<span class="ms-1">${hit}</span>`}</td><td class="cpu">${cpu}</td><td class="priv text-end">${mem}</td></tr>`).join('');
const leaf = (name, more) => `<tr><td><div class="d-flex align-items-center ps-1"><button class="box me-1 ${more ? '' : 'invisible'}" aria-label="Collapse"></button><svg width="15" height="13" class="me-1"><use href="#app"/></svg>${name}</div></td></tr>`;
document.getElementById('tree').innerHTML = procs.slice(0, 35).map(([c]) => `<tr class="${c}"><td class="bg"></td></tr>`).join('') + leaf('smss.exe') + leaf('services.exe', true);
</script>
</body>
</html>
